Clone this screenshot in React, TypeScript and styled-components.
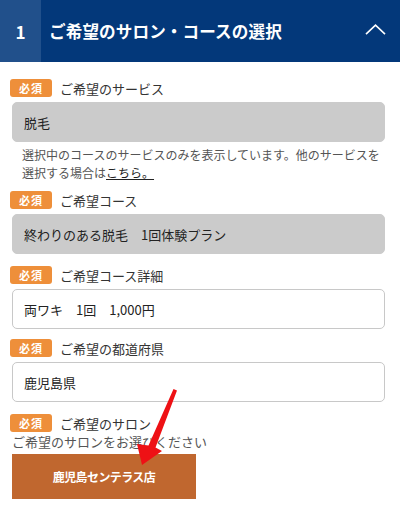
import React, { FC } from "react";
import styled, { createGlobalStyle } from "styled-components";

const GlobalStyle = createGlobalStyle`
  html, body {
    margin: 0;
    padding: 0;
    background: #fff;
  }
  body {
    font-family: "Noto Sans CJK JP", "Noto Sans", sans-serif;
    color: #333;
  }
`;

const Page = styled.div`
  position: relative;
  width: 400px;
  height: 510px;
  overflow: hidden;
`;

const Header = styled.div`
  display: flex;
  align-items: stretch;
  height: 62px;
  background: #03387a;
  color: #fff;
`;

const StepNumber = styled.div`
  width: 41px;
  display: flex;
  align-items: center;
  justify-content: center;
  background: #21508b;
  font-size: 17px;
  font-weight: 700;
`;

const Title = styled.div`
  flex: 1;
  display: flex;
  align-items: center;
  padding-left: 8px;
  font-size: 16.6px;
  font-weight: 700;
  letter-spacing: 0.1px;
`;

const Toggle = styled.div`
  width: 50px;
  display: flex;
  align-items: center;
  justify-content: center;
  padding-bottom: 3px;
`;

const Body = styled.div`
  display: flex;
  flex-direction: column;
  padding: 17px 15px 0 12px;
`;

const Field = styled.div<{ $gap?: number }>`
  display: flex;
  flex-direction: column;
  margin-bottom: ${(p) => p.$gap ?? 12}px;
`;

const LabelRow = styled.div`
  display: flex;
  align-items: center;
  gap: 8px;
  height: 18px;
  margin-left: -2px;
  margin-bottom: 5px;
`;

const Required = styled.span`
  display: inline-flex;
  align-items: center;
  justify-content: center;
  width: 42px;
  height: 18px;
  border-radius: 3px;
  background: #ee8f3a;
  color: #fff;
  font-size: 11px;
  font-weight: 700;
  letter-spacing: 1px;
`;

const LabelText = styled.span`
  font-size: 13px;
  color: #333;
`;

const InputBox = styled.div<{ $disabled?: boolean }>`
  height: 40px;
  box-sizing: border-box;
  display: flex;
  align-items: center;
  padding-left: 11px;
  border-radius: 5px;
  border: 1px solid ${(p) => (p.$disabled ? "#cbcbcb" : "#c8c8c8")};
  background: ${(p) => (p.$disabled ? "#cbcbcb" : "#fff")};
  font-size: 13px;
  color: #222;
  white-space: pre;
`;

const Note = styled.p`
  margin: 4px 0 0;
  padding-left: 10px;
  font-size: 12px;
  line-height: 17.5px;
  color: #555;

  a {
    color: #222;
    text-decoration: underline;
  }
`;

const Hint = styled.div`
  font-size: 13px;
  line-height: 18px;
  color: #555;
  margin-top: -4px;
`;

const SalonButton = styled.button`
  margin-top: 3px;
  width: 184px;
  height: 45px;
  border: none;
  background: #c0672f;
  color: #fff;
  font-family: inherit;
  font-size: 12px;
  font-weight: 700;
  letter-spacing: -0.6px;
  cursor: pointer;
`;

const Annotation = styled.svg`
  position: absolute;
  left: 0;
  top: 0;
  pointer-events: none;
`;

const Chevron: FC = () => (
  <svg width="21" height="11" viewBox="0 0 21 11" fill="none">
    <polyline
      points="1,10.2 10.5,1.2 20,10.2"
      stroke="#fff"
      strokeWidth="1.6"
      strokeLinejoin="miter"
    />
  </svg>
);

const fields = [
  { label: "ご希望コース詳細", value: "両ワキ　1回　1,000円", gap: 10 },
  { label: "ご希望の都道府県", value: "鹿児島県", gap: 12 },
];

const App: FC = () => (
  <Page>
    <GlobalStyle />
    <Header>
      <StepNumber>1</StepNumber>
      <Title>ご希望のサロン・コースの選択</Title>
      <Toggle>
        <Chevron />
      </Toggle>
    </Header>
    <Body>
      <Field $gap={10}>
        <LabelRow>
          <Required>必須</Required>
          <LabelText>ご希望のサービス</LabelText>
        </LabelRow>
        <InputBox $disabled>脱毛</InputBox>
        <Note>
          選択中のコースのサービスのみを表示しています。他のサービスを
          <br />
          選択する場合は<a href="#">こちら。</a>
        </Note>
      </Field>
      <Field>
        <LabelRow>
          <Required>必須</Required>
          <LabelText>ご希望コース</LabelText>
        </LabelRow>
        <InputBox $disabled>終わりのある脱毛　1回体験プラン</InputBox>
      </Field>
      {fields.map(({ label, value, gap }) => (
        <Field key={label} $gap={gap}>
          <LabelRow>
            <Required>必須</Required>
            <LabelText>{label}</LabelText>
          </LabelRow>
          <InputBox>{value}</InputBox>
        </Field>
      ))}
      <Field>
        <LabelRow>
          <Required>必須</Required>
          <LabelText>ご希望のサロン</LabelText>
        </LabelRow>
        <Hint>ご希望のサロンをお選びください</Hint>
        <SalonButton>鹿児島センテラス店</SalonButton>
      </Field>
    </Body>
    <Annotation width="400" height="510" viewBox="0 0 400 510">
      <polygon
        points="173.5,389 177,390.5 155.5,447.5 162,451 142,465 137,444 148.5,445.5"
        fill="#ee1115"
      />
    </Annotation>
  </Page>
);

export default App;
